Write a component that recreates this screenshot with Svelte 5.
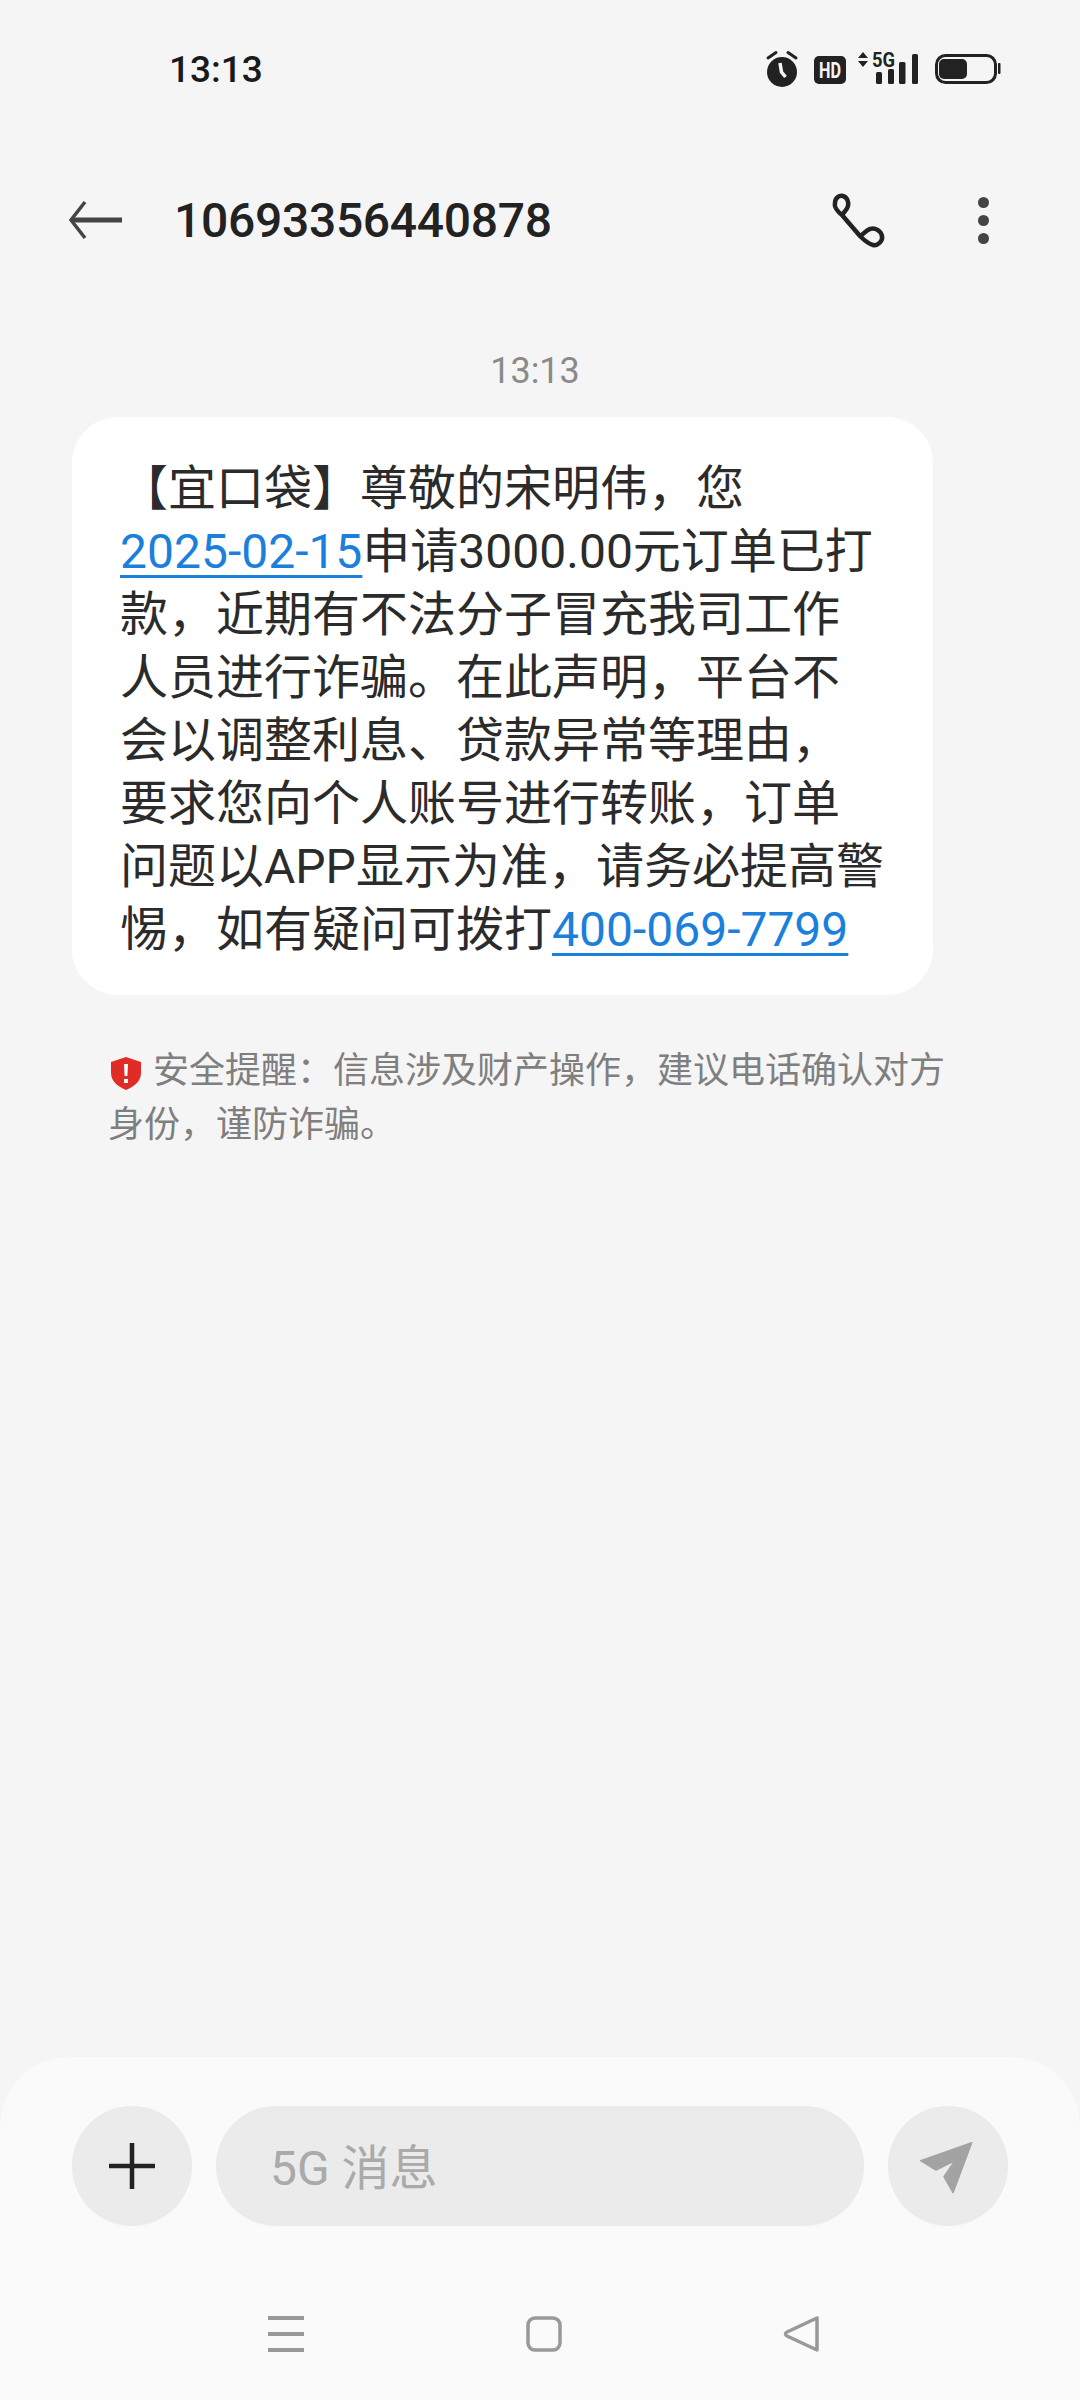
<script>
  const time = '13:13';
  const sender = '10693356440878';
</script>

<div class="phone">
  <div class="status">
    <span class="clock">{time}</span>
    <svg class="status-icons" width="244" height="50" viewBox="0 0 244 50">
      <!-- alarm -->
      <circle cx="22" cy="32" r="15" fill="#222" />
      <path d="M8 18l8-5.500M36 18l-8-5.500" stroke="#222" stroke-width="3" stroke-linecap="round" />
      <path d="M20 23l1.500 9 4 5" fill="none" stroke="#f5f5f5" stroke-width="3.500" />
      <!-- HD -->
      <rect x="54" y="16" width="32" height="28" rx="5" fill="#222" />
      <text x="59" y="38" class="hd" textLength="22" lengthAdjust="spacingAndGlyphs">HD</text>
      <!-- data arrows + 5G -->
      <path d="M98 18l5-6 5 6zM98 21l5 6 5-6z" fill="#222" />
      <text x="112" y="27" class="net" textLength="23" lengthAdjust="spacingAndGlyphs">5G</text>
      <rect x="116" y="32" width="6" height="12" rx="1.500" fill="#222" />
      <rect x="128" y="29" width="6" height="15" rx="1.500" fill="#222" />
      <rect x="139" y="22" width="6.500" height="22" rx="1.500" fill="#222" />
      <rect x="152" y="14" width="6" height="30" rx="1.500" fill="#222" />
      <!-- battery -->
      <rect x="176.500" y="15.500" width="59" height="27" rx="9" fill="none" stroke="#222" stroke-width="3" />
      <rect x="179" y="19" width="28" height="20" rx="5" fill="#222" />
      <rect x="238" y="23" width="2.500" height="11" rx="1" fill="#222" />
    </svg>
  </div>

  <div class="titlebar">
    <svg class="back" width="54" height="40" viewBox="0 0 54 40">
      <path d="M16 2L2 20l14 18" fill="none" stroke="#444" stroke-width="3.500" />
      <path d="M3 20h50" stroke="#444" stroke-width="5" />
    </svg>
    <h1>{sender}</h1>
    <svg class="call" width="80" height="75" viewBox="0 0 80 75">
      <path d="M22 30C18 27 14 22 15 18 15 13 19 10 23 11 27 12 29 17 28 21 27 25 24 27 22 30L40 51C44 49 46 45 50 44 55 42 61 46 62 51 63 56 58 61 53 60 48 59 44 55 40 51" fill="none" stroke="#222" stroke-width="4.500" stroke-linejoin="round" stroke-linecap="round" />
    </svg>
    <div class="dots"><i></i><i></i><i></i></div>
  </div>

  <div class="thread">
    <div class="stamp">{time}</div>
    <div class="bubble">
      【宜口袋】尊敬的宋明伟，您<br />
      <a href="#date">2025-02-15</a>申请3000.00元订单已打<br />
      款，近期有不法分子冒充我司工作<br />
      人员进行诈骗。在此声明，平台不<br />
      会以调整利息、贷款异常等理由，<br />
      要求您向个人账号进行转账，订单<br />
      问题以APP显示为准，请务必提高警<br />
      惕，如有疑问可拨打<a href="#tel">400-069-7799</a>
    </div>
    <p class="warning">
      <svg width="32" height="33" viewBox="0 0 32 33">
        <path d="M16 0l15 5v11c0 8-6 13-15 17C7 29 1 24 1 16V5z" fill="#e02b27" />
        <path d="M14 7h4l-.6 12h-2.800zM14 22h4v4h-4z" fill="#fff" />
      </svg>安全提醒：信息涉及财产操作，建议电话确认对方<br />身份，谨防诈骗。
    </p>
  </div>

  <div class="composer">
    <div class="inputrow">
      <div class="round">
        <svg width="48" height="48" viewBox="0 0 48 48">
          <path d="M24 1v46M1 24h46" stroke="#222" stroke-width="4.500" />
        </svg>
      </div>
      <div class="field">5G 消息</div>
      <div class="round">
        <svg class="send" width="90" height="75" viewBox="0 0 90 75">
          <path d="M71.700 12.700L20.700 30.700 36 40 55 30.700 44 46.700 53 62.700z" fill="#a3a3a3" stroke="#a3a3a3" stroke-width="1.500" stroke-linejoin="round" />
        </svg>
      </div>
    </div>
    <div class="navbar">
      <svg width="36" height="36" viewBox="0 0 36 36">
        <path d="M0 2h36M0 18h36M0 34h36" stroke="#999" stroke-width="4" />
      </svg>
      <svg width="36" height="36" viewBox="0 0 36 36">
        <rect x="2" y="2" width="32" height="32" rx="7" fill="none" stroke="#999" stroke-width="3.500" />
      </svg>
      <svg width="36" height="36" viewBox="0 0 36 36">
        <path d="M33 2v32L3 20c-2-1-2-3 0-4z" fill="none" stroke="#999" stroke-width="3.500" stroke-linejoin="round" />
      </svg>
    </div>
  </div>
</div>

<style>
  :global(body) {
    margin: 0;
    background: #f5f5f5;
  }
  .phone {
    width: 1080px;
    height: 2400px;
    display: flex;
    flex-direction: column;
    background: #f5f5f5;
    color: #222;
    font-family: Roboto, "Noto Sans CJK SC", sans-serif;
  }
  .status {
    height: 140px;
    box-sizing: border-box;
    padding: 40px 0 0 169px;
    display: flex;
    align-items: flex-start;
  }
  .clock {
    font-size: 37px;
    line-height: 60px;
    font-weight: 500;
    color: #1a1a1a;
  }
  .status-icons {
    margin-left: auto;
    margin-right: 76px;
  }
  .hd {
    font: 700 22px Roboto, sans-serif;
    fill: #f5f5f5;
  }
  .net {
    font: 700 20px Roboto, sans-serif;
    fill: #222;
  }
  .titlebar {
    height: 160px;
    display: flex;
    align-items: center;
    padding-left: 69px;
  }
  .titlebar h1 {
    margin: 0 0 0 51px;
    font-size: 48px;
    font-weight: 500;
    letter-spacing: -0.3px;
    color: #222;
  }
  .call {
    margin: 5px 0 0 auto;
  }
  .dots {
    display: flex;
    flex-direction: column;
    gap: 7px;
    margin: 0 91px 0 78px;
  }
  .dots i {
    width: 11px;
    height: 11px;
    border-radius: 50%;
    background: #444;
  }
  .thread {
    flex: 1;
    padding: 51px 72px 0;
  }
  .stamp {
    width: 926px;
    text-align: center;
    font-size: 36px;
    line-height: 40px;
    color: #8a8a8a;
  }
  .bubble {
    margin-top: 26px;
    width: 861px;
    box-sizing: border-box;
    padding: 40px 0 34px 48px;
    background: #fff;
    border-radius: 46px;
    font-size: 48px;
    line-height: 63px;
    color: #2b2b2b;
  }
  .bubble a {
    color: #1b7fdc;
    text-decoration: underline;
    text-underline-offset: 7px;
    text-decoration-thickness: 3px;
  }
  .warning {
    margin: 49px 0 0 36px;
    font-size: 36px;
    line-height: 54px;
    color: #7f7f7f;
  }
  .warning svg {
    vertical-align: -7px;
    margin: 0 11px 0 2px;
  }
  .composer {
    height: 343px;
    box-sizing: border-box;
    padding-top: 49px;
    background: #fafafa;
    border-radius: 70px 70px 0 0;
  }
  .inputrow {
    display: flex;
    gap: 24px;
    padding: 0 72px;
  }
  .round {
    width: 120px;
    height: 120px;
    flex: none;
    border-radius: 50%;
    background: #ebebeb;
    display: flex;
    align-items: center;
    justify-content: center;
  }
  .send {
    margin: 3px 6px 0 0;
  }
  .field {
    flex: 1;
    height: 120px;
    box-sizing: border-box;
    padding: 3px 0 0 54px;
    border-radius: 60px;
    background: #ebebeb;
    font-size: 48px;
    line-height: 120px;
    color: #aaa;
  }
  .navbar {
    display: flex;
    justify-content: space-between;
    padding: 90px 260px 0 268px;
  }
  .navbar svg {
    overflow: visible;
  }
</style>
